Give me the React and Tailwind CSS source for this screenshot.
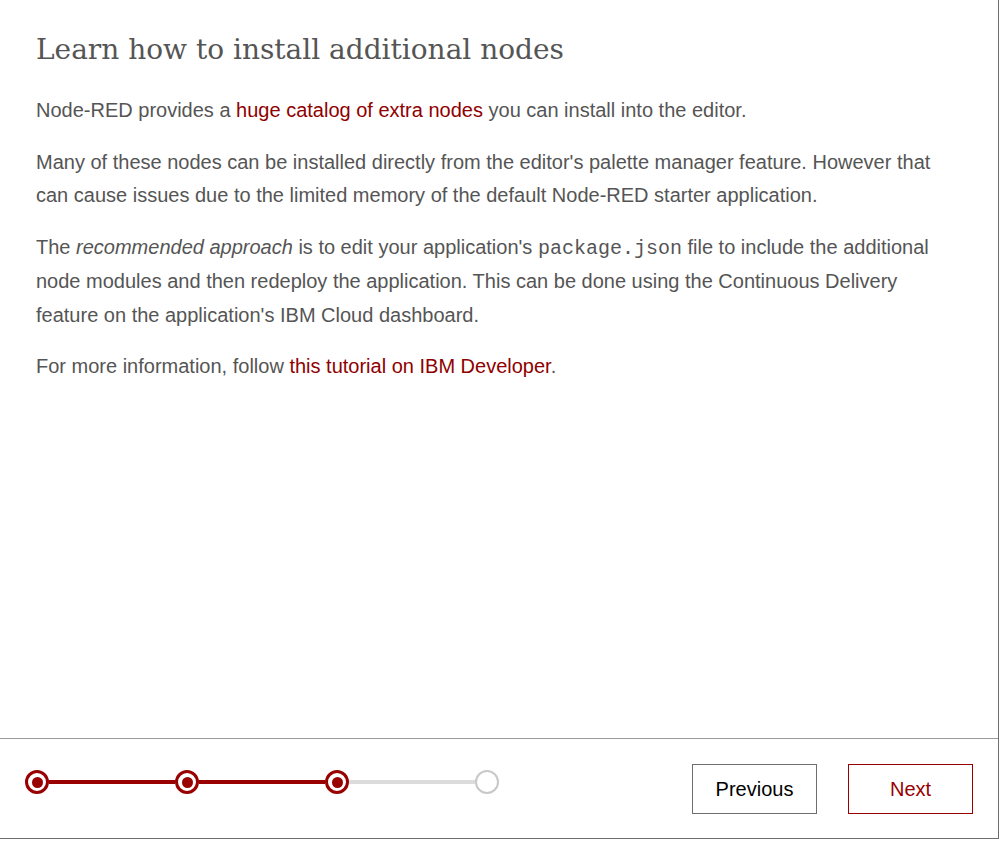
import { useState } from 'react'

const steps = [true, true, true, false]

function StepDot({ done }) {
  if (!done) {
    return <div className="w-[24px] h-[24px] rounded-full border-2 border-[#c8c8c8] bg-white shrink-0" />
  }
  return (
    <div className="w-[24px] h-[24px] rounded-full border-[3px] border-[#900] bg-white flex items-center justify-center shrink-0">
      <div className="w-[11px] h-[11px] rounded-full bg-[#900]" />
    </div>
  )
}

function Progress() {
  return (
    <div className="flex items-center mt-[6px]">
      {steps.map((done, i) => (
        <div key={i} className="flex items-center">
          {i > 0 && (
            <div className={`w-[126px] h-[4px] ${steps[i] ? 'bg-[#900]' : 'bg-[#dcdcdc]'}`} />
          )}
          <StepDot done={done} />
        </div>
      ))}
    </div>
  )
}

export default function App() {
  const [step, setStep] = useState(3)

  return (
    <div className="w-[999px] h-[839px] bg-white border-r border-b border-[#6e6e6e] flex flex-col">
      <div className="flex-1 px-[36px] pt-[29px] text-[#555] font-['Liberation_Sans',Arial,sans-serif]">
        <h1 className="font-['DejaVu_Serif',serif] text-[28px] leading-[42px] text-[#555] mb-[23px]">
          Learn how to install additional nodes
        </h1>
        <div className="text-[20px] leading-[33.5px] space-y-[18px]">
          <p>
            Node-RED provides a <a className="text-[#8f0000]">huge catalog of extra nodes</a> you can install into the editor.
          </p>
          <p>
            Many of these nodes can be installed directly from the editor's palette manager feature. However that can cause issues due to the limited memory of the default Node-RED starter application.
          </p>
          <p>
            The <em>recommended approach</em> is to edit your application's{' '}
            <code className="font-['Liberation_Mono','Courier_New',monospace] text-[20px]">package.json</code> file to include the additional node modules and then redeploy the application. This can be done using the Continuous Delivery feature on the application's IBM Cloud dashboard.
          </p>
          <p>
            For more information, follow <a className="text-[#8f0000]">this tutorial on IBM Developer</a>.
          </p>
        </div>
      </div>

      <div className="h-[100px] border-t border-[#999] px-[25px] pt-[25px] flex justify-between items-start">
        <Progress />
        <div className="flex gap-[31px] font-['Liberation_Sans',Arial,sans-serif] text-[20px]">
          <button
            onClick={() => setStep(Math.max(1, step - 1))}
            className="w-[125px] h-[50px] border border-[#6e6e6e] bg-white text-black"
          >
            Previous
          </button>
          <button
            onClick={() => setStep(Math.min(4, step + 1))}
            className="w-[125px] h-[50px] border border-[#900] bg-white text-[#900]"
          >
            Next
          </button>
        </div>
      </div>
    </div>
  )
}
